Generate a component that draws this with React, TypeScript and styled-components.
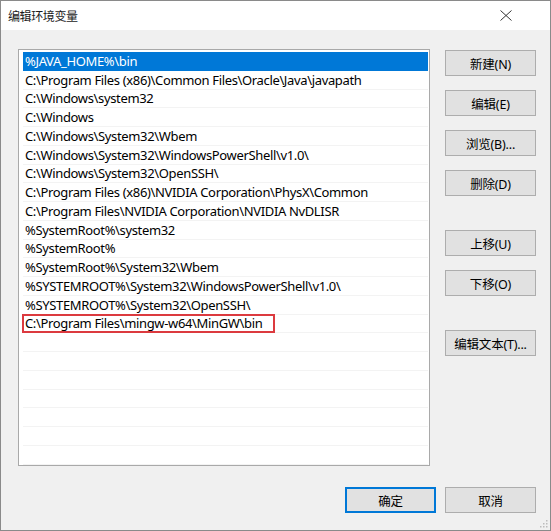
import styled, { createGlobalStyle } from 'styled-components'

const GlobalStyle = createGlobalStyle`
  html, body {
    margin: 0;
    padding: 0;
    background: #ffffff;
  }
  * {
    box-sizing: border-box;
  }
`

const paths = [
  '%JAVA_HOME%\\bin',
  'C:\\Program Files (x86)\\Common Files\\Oracle\\Java\\javapath',
  'C:\\Windows\\system32',
  'C:\\Windows',
  'C:\\Windows\\System32\\Wbem',
  'C:\\Windows\\System32\\WindowsPowerShell\\v1.0\\',
  'C:\\Windows\\System32\\OpenSSH\\',
  'C:\\Program Files (x86)\\NVIDIA Corporation\\PhysX\\Common',
  'C:\\Program Files\\NVIDIA Corporation\\NVIDIA NvDLISR',
  '%SystemRoot%\\system32',
  '%SystemRoot%',
  '%SystemRoot%\\System32\\Wbem',
  '%SYSTEMROOT%\\System32\\WindowsPowerShell\\v1.0\\',
  '%SYSTEMROOT%\\System32\\OpenSSH\\',
  'C:\\Program Files\\mingw-w64\\MinGW\\bin',
]

const SELECTED = 0
const MARKED = 14
const EMPTY_ROWS = 7

const Window = styled.div`
  width: 551px;
  height: 531px;
  display: flex;
  flex-direction: column;
  border: 1px solid #8a8a8a;
  background: #f0f0f0;
  font-family: 'Noto Sans', 'Noto Sans CJK SC', sans-serif;
  color: #000;
  position: relative;
  overflow: hidden;
`

const TitleBar = styled.div`
  height: 29px;
  flex: none;
  display: flex;
  align-items: center;
  justify-content: space-between;
  background: #ffffff;
  padding: 0 38px 0 7px;
`

const Title = styled.span`
  font-family: 'Noto Sans CJK SC', sans-serif;
  font-size: 12px;
  color: #1a1a1a;
  letter-spacing: -0.4px;
`

const CloseIcon = styled.svg`
  width: 12px;
  height: 11px;
  display: block;
`

const Body = styled.div`
  flex: 1;
  display: flex;
  flex-direction: column;
  padding: 19px 14px 17px 17px;
`

const Main = styled.div`
  display: flex;
  gap: 15px;
`

const ListBox = styled.div`
  width: 412px;
  height: 417px;
  background: #ffffff;
  border: 1px solid #a9a9a9;
  padding: 2px 1px 0 4px;
  overflow: hidden;
`

const Row = styled.div<{ $selected?: boolean }>`
  height: 18.75px;
  display: flex;
  align-items: center;
  padding-left: 2px;
  font-size: 13px;
  letter-spacing: -0.35px;
  white-space: nowrap;
  position: relative;
  background: ${({ $selected }) => ($selected ? '#0078d7' : 'transparent')};
  color: ${({ $selected }) => ($selected ? '#ffffff' : '#000000')};
  border-bottom: 1px solid ${({ $selected }) => ($selected ? '#0078d7' : '#f3f3f3')};
`

const Marker = styled.div`
  position: absolute;
  left: -1px;
  top: -1px;
  width: 253px;
  height: 19px;
  border: 2px solid #dc3a3f;
  pointer-events: none;
`

const ButtonColumn = styled.div`
  display: flex;
  flex-direction: column;
  gap: 14px;
  padding-top: 1px;
`

const Button = styled.button<{ $spaced?: boolean; $primary?: boolean }>`
  width: 91px;
  height: 26px;
  margin: ${({ $spaced }) => ($spaced ? '20px 0 0' : '0')};
  padding: 0;
  background: #e1e1e1;
  border: 1px solid ${({ $primary }) => ($primary ? '#0078d7' : '#adadad')};
  box-shadow: ${({ $primary }) => ($primary ? 'inset 0 0 0 1px #0078d7' : 'none')};
  font-family: 'Noto Sans', 'Noto Sans CJK SC', sans-serif;
  font-size: 12.5px;
  letter-spacing: -0.2px;
  color: #000;
  display: flex;
  align-items: center;
  justify-content: center;
`

const Footer = styled.div`
  margin-top: auto;
  display: flex;
  justify-content: flex-end;
  gap: 9px;
`

const Grip = styled.svg`
  position: absolute;
  right: 2px;
  bottom: 2px;
  width: 10px;
  height: 10px;
`

export default function App() {
  const rows = [...paths, ...Array.from({ length: EMPTY_ROWS }, () => '')]
  return (
    <>
      <GlobalStyle />
      <Window>
        <TitleBar>
          <Title>编辑环境变量</Title>
          <CloseIcon viewBox="0 0 12 11">
            <path d="M0.5 0.5 L11.5 10.5 M11.5 0.5 L0.5 10.5" stroke="#333" strokeWidth="1" fill="none" />
          </CloseIcon>
        </TitleBar>
        <Body>
          <Main>
            <ListBox>
              {rows.map((p, i) => (
                <Row key={i} $selected={i === SELECTED}>
                  {p}
                  {i === MARKED && <Marker />}
                </Row>
              ))}
            </ListBox>
            <ButtonColumn>
              <Button>新建(N)</Button>
              <Button>编辑(E)</Button>
              <Button>浏览(B)...</Button>
              <Button>删除(D)</Button>
              <Button $spaced>上移(U)</Button>
              <Button>下移(O)</Button>
              <Button $spaced>编辑文本(T)...</Button>
            </ButtonColumn>
          </Main>
          <Footer>
            <Button $primary>确定</Button>
            <Button>取消</Button>
          </Footer>
        </Body>
        <Grip viewBox="0 0 10 10">
          <rect x="8" y="2" width="1.5" height="1.5" fill="#bcbcbc" />
          <rect x="5" y="5" width="1.5" height="1.5" fill="#bcbcbc" />
          <rect x="8" y="5" width="1.5" height="1.5" fill="#bcbcbc" />
          <rect x="2" y="8" width="1.5" height="1.5" fill="#bcbcbc" />
          <rect x="5" y="8" width="1.5" height="1.5" fill="#bcbcbc" />
          <rect x="8" y="8" width="1.5" height="1.5" fill="#bcbcbc" />
        </Grip>
      </Window>
    </>
  )
}
